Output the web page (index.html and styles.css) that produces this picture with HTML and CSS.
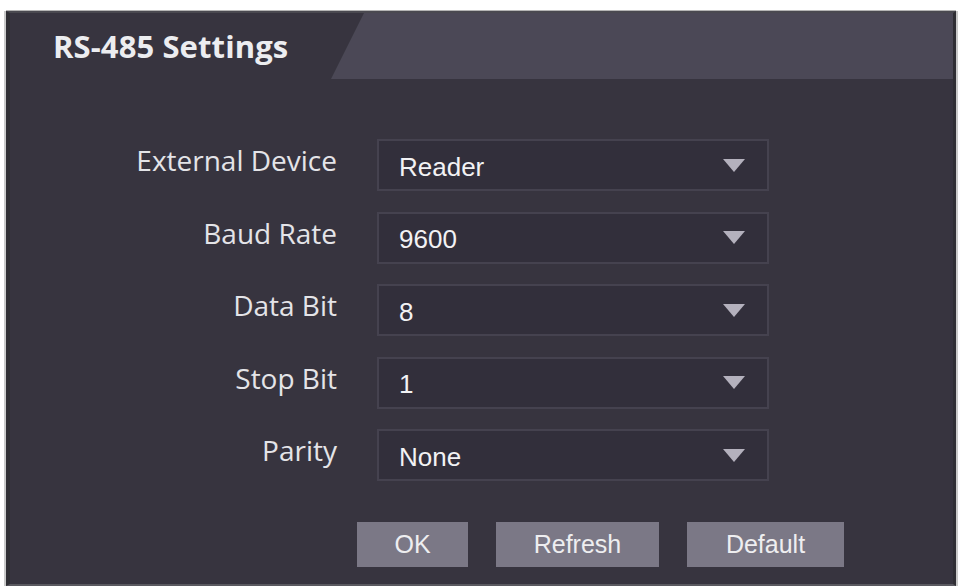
FILE: index.html
```html
<!DOCTYPE html>
<html lang="en">
    <head>
        <meta charset="UTF-8">
        <meta name="viewport" content="width=device-width, initial-scale=1.0">
        <title>RS-485 Settings</title>
        <link rel="stylesheet" href="styles.css">
    </head>
    <body>
        <div class="panel">
            <div class="panel__header">
                <div class="panel__tab">
                    <h1 class="panel__title">RS-485 Settings</h1>
                </div>
            </div>

            <form class="settings" name="rs485">
                <label class="settings__label">External Device</label>
                <div class="select"><span class="select__value">Reader</span><span class="select__arrow"></span></div>

                <label class="settings__label">Baud Rate</label>
                <div class="select"><span class="select__value">9600</span><span class="select__arrow"></span></div>

                <label class="settings__label">Data Bit</label>
                <div class="select"><span class="select__value">8</span><span class="select__arrow"></span></div>

                <label class="settings__label">Stop Bit</label>
                <div class="select"><span class="select__value">1</span><span class="select__arrow"></span></div>

                <label class="settings__label">Parity</label>
                <div class="select"><span class="select__value">None</span><span class="select__arrow"></span></div>
            </form>

            <div class="actions">
                <button class="actions__button actions__button--ok">OK</button>
                <button class="actions__button actions__button--refresh">Refresh</button>
                <button class="actions__button actions__button--default">Default</button>
            </div>
        </div>
    </body>
</html>
```

FILE: styles.css
```css
*, *:before, *:after {
    box-sizing: border-box;
}

body {
    margin: 0;
    background: #fff;
    font-family: 'Open Sans', 'Noto Sans', sans-serif;
}

.panel {
    margin: 11px 6px 0 6px;
    height: 575px;
    background: #37343f;
    border-top: 2px solid #4a4950;
    border-left: 4px solid #2f2e34;
    border-right: 3px solid #2f2e34;
    border-bottom: 2px solid #5a5960;
    box-shadow: -2px 0 0 #c9c9c9, 2px 0 0 #c9c9c9, 0 -1px 0 #b5b5b5;
}

/* header band with the slanted title tab */
.panel__header {
    height: 66px;
    background: #4b4856;
    display: flex;
}

.panel__tab {
    width: 354px;
    background: #37343f;
    clip-path: polygon(0 0, 100% 0, calc(100% - 33px) 100%, 0 100%);
    display: flex;
    align-items: center;
    padding-left: 43px;
}

.panel__title {
    margin: 0;
    font-size: 31px;
    font-weight: 700;
    color: #ecedf0;
    letter-spacing: 0.1px;
}

.settings {
    display: grid;
    grid-template-columns: 327px 392px;
    column-gap: 40px;
    row-gap: 20.5px;
    margin-top: 60px;
}

.settings__label {
    text-align: right;
    font-size: 28px;
    color: #e4e4e8;
    line-height: 1;
    padding-top: 7px;
}

.select {
    height: 52px;
    background: #322f3b;
    border: 2px solid #45424f;
    display: flex;
    align-items: center;
    justify-content: space-between;
    padding: 0 22px 0 20px;
}

.select__value {
    font-family: 'Liberation Sans', Arial, sans-serif;
    font-size: 26px;
    color: #f2f2f4;
    padding-top: 4px;
}

.select__arrow {
    width: 0;
    height: 0;
    border-left: 11px solid transparent;
    border-right: 11px solid transparent;
    border-top: 13px solid #b4b1bd;
}

.actions {
    display: flex;
    gap: 28px;
    padding-left: 347px;
    margin-top: 41px;
}

.actions__button {
    height: 45px;
    border: 0;
    background: #7b7886;
    color: #eeeef0;
    font-family: 'Liberation Sans', Arial, sans-serif;
    font-size: 25px;
    padding: 0;
    cursor: pointer;
}

.actions__button--ok {
    width: 111px;
}

.actions__button--refresh {
    width: 163px;
}

.actions__button--default {
    width: 157px;
}
```
